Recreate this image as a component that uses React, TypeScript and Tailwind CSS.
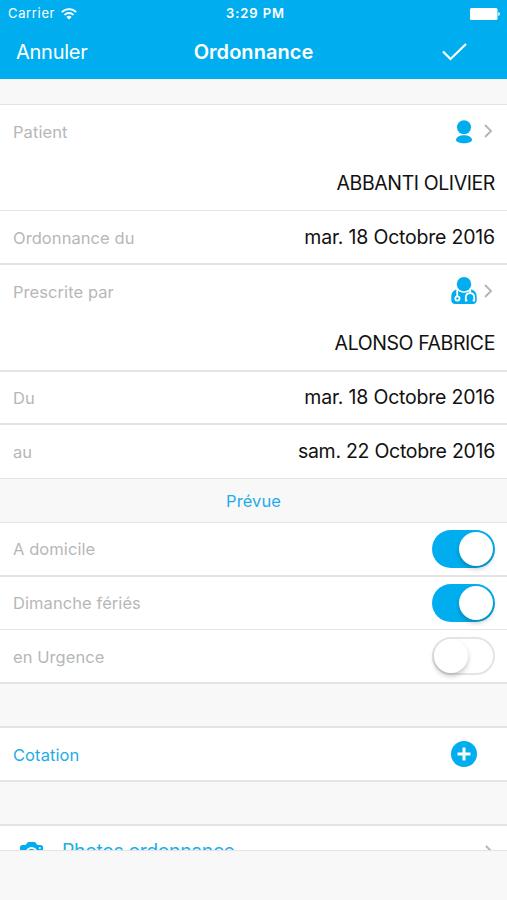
import type { ReactNode } from "react";

function Chevron() {
  return (
    <svg className="h-[14px] w-[9px]" viewBox="0 0 9 14" fill="none" stroke="#b4b4b6" strokeWidth="1.9">
      <path d="M1 1l6 6-6 6" />
    </svg>
  );
}

function PersonIcon() {
  return (
    <svg className="h-[24px] w-[18px]" viewBox="0 0 18 24" fill="#00aeef">
      <circle cx="9" cy="7.2" r="7" />
      <path d="M1 20.1C1 16.8 4.6 15.2 9 15.2s8 1.6 8 4.900c0 1.900-3.600 3.200-8 3.200s-8-1.300-8-3.200z" />
    </svg>
  );
}

function DoctorIcon() {
  return (
    <svg className="mb-[2px] h-[27px] w-[26px]" viewBox="0 0 26 27" fill="none">
      <path
        d="M6 12.500C2.500 13 .3 15.500.3 20v3.500C.3 25.800 1.800 27 4 27h18c2.200 0 3.700-1.200 3.700-3.500V20c0-4.500-2.200-7-5.700-7.500l-3 2.500H9z"
        fill="#00aeef"
      />
      <circle cx="13" cy="7.200" r="7.200" fill="#00aeef" />
      <g stroke="#fff" strokeWidth="1.800" strokeLinecap="round">
        <path d="M6.200 12.500v6" />
        <circle cx="6.400" cy="21.500" r="2.100" />
        <path d="M6.800 12.500c1.600 1.900 3.700 2.800 6.200 2.800s4.600-.9 6.200-2.800" strokeWidth="1" />
        <path d="M19.200 12.500v3.300M15.600 23.500h-.8v-2.900c0-2.900 1.600-4.400 4.200-4.400s4.200 1.500 4.200 4.400v2.900h-.8" />
      </g>
    </svg>
  );
}

function Label({ children, blue = false }: { children: ReactNode; blue?: boolean }) {
  return (
    <span className={`text-[16.5px] leading-5 tracking-[0.07px] ${blue ? "text-[#1fade6]" : "text-[#b7b7b7]"}`}>
      {children}
    </span>
  );
}

function Value({ children, className = "tracking-[-0.2px]" }: { children: ReactNode; className?: string }) {
  return <span className={`text-[19.5px] leading-6 text-[#111] ${className}`}>{children}</span>;
}

function Row({ children, className }: { children: ReactNode; className: string }) {
  return (
    <div className={`flex shrink-0 items-center justify-between border-[#e4e4e5] bg-white pr-[12px] pl-[13px] ${className}`}>
      {children}
    </div>
  );
}

function PersonRow({ label, name, icon }: { label: string; name: string; icon: ReactNode }) {
  return (
    <div className="flex flex-1 flex-col">
      <div className="flex h-[51px] items-center justify-between pr-[2px]">
        <Label>{label}</Label>
        <div className="flex items-center">
          <div className="flex w-[28px] justify-center">{icon}</div>
          <div className="ml-[6px] flex pb-[2px]">
            <Chevron />
          </div>
        </div>
      </div>
      <div className="flex h-[52px] items-center justify-end">
        <Value className="tracking-[-0.41px]">{name}</Value>
      </div>
    </div>
  );
}

function Toggle({ on = false }: { on?: boolean }) {
  return (
    <span
      role="switch"
      aria-checked={on}
      className={`flex h-[38px] w-[63px] items-center rounded-full ${
        on ? "justify-end bg-[#00aeef] pr-[2px]" : "justify-start border-2 border-[#e5e5e5] bg-white"
      }`}
    >
      <span className="size-[34px] rounded-full bg-white shadow-[0_3px_5px_rgba(0,0,0,0.22)]" />
    </span>
  );
}

export default function App() {
  return (
    <div className="flex h-[900px] w-[507px] flex-col overflow-hidden bg-[#f8f8f8] font-['Inter','Liberation_Sans',sans-serif]">
      <header className="h-[79px] shrink-0 bg-[#00aeef] text-white">
        <div className="grid h-[27px] grid-cols-3 items-center pr-[7px] pl-[8px] text-[13px]">
          <div className="flex items-center gap-[6px]">
            <span className="tracking-[0.65px]">Carrier</span>
            <svg className="h-[12px] w-[16px]" viewBox="0 0 16 12" fill="none" stroke="white" strokeWidth="1.800">
              <path d="M.8 4.200C4.800.1 11.200.1 15.200 4.200M3.400 7C6 4.300 10 4.300 12.600 7" />
              <path d="M5.400 8.900c1.500-1.500 3.700-1.500 5.200 0L8 11.500z" fill="white" stroke="none" />
            </svg>
          </div>
          <span className="pl-[3px] text-center font-semibold tracking-[0.9px] whitespace-nowrap">3:29 PM</span>
          <svg className="h-[12px] w-[30px] justify-self-end" viewBox="0 0 30 12" fill="white">
            <rect width="27.500" height="12" rx="1.500" />
            <path d="M28.300 4c2 .6 2 3.400 0 4z" />
          </svg>
        </div>
        <div className="grid h-[50px] grid-cols-[1fr_auto_1fr] items-center px-[16px] text-[20px]">
          <span className="tracking-[-0.25px]">Annuler</span>
          <span className="font-semibold tracking-[0.05px]">Ordonnance</span>
          <svg className="mr-[24px] h-[18px] w-[25px] justify-self-end" viewBox="0 0 25 18" fill="none" stroke="white" strokeWidth="2.200">
            <path d="M1 8.500l7.500 7.500L24 1" />
          </svg>
        </div>
      </header>

      <Row className="mt-[25px] h-[107px] border-t border-b">
        <PersonRow label="Patient" name="ABBANTI OLIVIER" icon={<PersonIcon />} />
      </Row>
      <Row className="h-[54px] border-b-2">
        <div className="flex pt-[1px]">
          <Label>Ordonnance du</Label>
        </div>
        <Value>mar. 18 Octobre 2016</Value>
      </Row>
      <Row className="h-[107px] border-b-2">
        <PersonRow label="Prescrite par" name="ALONSO FABRICE" icon={<DoctorIcon />} />
      </Row>
      <Row className="h-[53px] border-b-2">
        <Label>Du</Label>
        <div className="flex pb-[1px]">
          <Value>mar. 18 Octobre 2016</Value>
        </div>
      </Row>
      <Row className="h-[54px] border-b">
        <Label>au</Label>
        <div className="flex pb-[1px]">
          <Value className="tracking-[-0.28px]">sam. 22 Octobre 2016</Value>
        </div>
      </Row>
      <div className="flex h-[43px] shrink-0 items-center justify-center">
        <Label blue>Prévue</Label>
      </div>
      <Row className="h-[55px] border-t border-b-2">
        <Label>A domicile</Label>
        <Toggle on />
      </Row>
      <Row className="h-[53px] border-b">
        <Label>Dimanche fériés</Label>
        <Toggle on />
      </Row>
      <Row className="h-[54px] border-b-2">
        <div className="flex pt-[1px]">
          <Label>en Urgence</Label>
        </div>
        <Toggle />
      </Row>
      <Row className="mt-[42px] h-[56px] border-t-2 border-b-2">
        <div className="flex pt-[1px]">
          <Label blue>Cotation</Label>
        </div>
        <svg className="mr-[18px] size-[26px]" viewBox="0 0 26 26">
          <circle cx="13" cy="13" r="13" fill="#00aeef" />
          <path d="M13 6.500v13M6.500 13h13" stroke="white" strokeWidth="3" />
        </svg>
      </Row>
      <div className="mt-[42px] h-[27px] shrink-0 overflow-hidden border-t-2 border-b border-[#e4e4e5] bg-white">
        <div className="flex h-[52px] items-center pr-[13px] pl-[20px]">
          <svg className="h-[20px] w-[23px]" viewBox="0 0 23 20">
            <path
              d="M2.500 3h3L7.300.8Q7.800 0 8.800 0h5.400q1 0 1.500.8L17.500 3h3Q23 3 23 5.500v12q0 2.500-2.500 2.500h-18Q0 20 0 17.500v-12Q0 3 2.500 3z"
              fill="#00aeef"
            />
            <circle cx="11.500" cy="11" r="5" fill="none" stroke="white" strokeWidth="2" />
            <circle cx="19.800" cy="6" r="1" fill="white" />
          </svg>
          <span className="ml-[19px] flex-1 text-[19.500px] tracking-[-0.42px] text-[#1fade6]">Photos ordonnance</span>
          <Chevron />
        </div>
      </div>
    </div>
  );
}
